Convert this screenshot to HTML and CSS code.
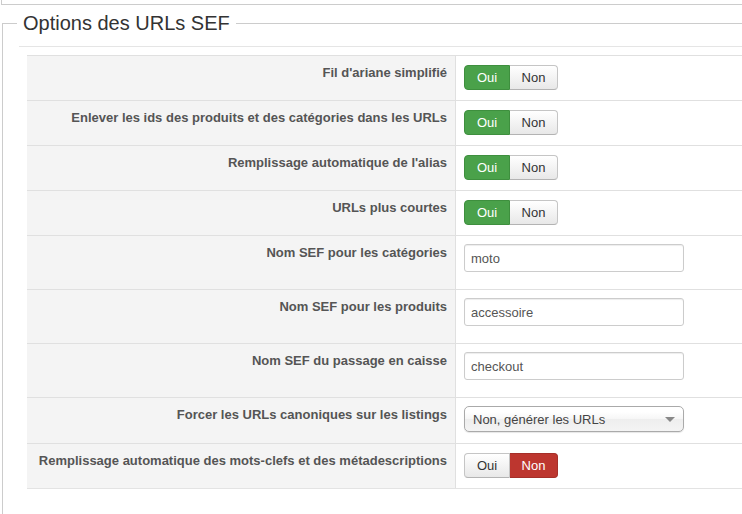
FILE: index.html
```html
<!DOCTYPE html>
<html lang="fr">
<head>
  <meta charset="UTF-8">
  <title>Options des URLs SEF</title>
  <link rel="stylesheet" href="styles.css">
</head>
<body>
  <div class="prev-box"></div>
  <fieldset class="options">
    <legend>Options des URLs SEF</legend>
    <div class="rule"></div>
    <table class="params">
      <tr>
        <td class="key">Fil d'ariane simplifié</td>
        <td class="ctrl toggle-cell">
          <div class="btn-group">
            <span class="btn btn-yes">Oui</span><span class="btn">Non</span>
          </div>
        </td>
      </tr>
      <tr>
        <td class="key">Enlever les ids des produits et des catégories dans les URLs</td>
        <td class="ctrl toggle-cell">
          <div class="btn-group">
            <span class="btn btn-yes">Oui</span><span class="btn">Non</span>
          </div>
        </td>
      </tr>
      <tr>
        <td class="key">Remplissage automatique de l'alias</td>
        <td class="ctrl toggle-cell">
          <div class="btn-group">
            <span class="btn btn-yes">Oui</span><span class="btn">Non</span>
          </div>
        </td>
      </tr>
      <tr>
        <td class="key">URLs plus courtes</td>
        <td class="ctrl toggle-cell">
          <div class="btn-group">
            <span class="btn btn-yes">Oui</span><span class="btn">Non</span>
          </div>
        </td>
      </tr>
      <tr>
        <td class="key">Nom SEF pour les catégories</td>
        <td class="ctrl input-cell"><input type="text" class="text-input" value="moto"></td>
      </tr>
      <tr>
        <td class="key">Nom SEF pour les produits</td>
        <td class="ctrl input-cell"><input type="text" class="text-input" value="accessoire"></td>
      </tr>
      <tr>
        <td class="key">Nom SEF du passage en caisse</td>
        <td class="ctrl input-cell"><input type="text" class="text-input" value="checkout"></td>
      </tr>
      <tr>
        <td class="key">Forcer les URLs canoniques sur les listings</td>
        <td class="ctrl select-cell">
          <div class="select-box">
            <span>Non, générer les URLs</span>
            <span class="arrow"></span>
          </div>
        </td>
      </tr>
      <tr>
        <td class="key">Remplissage automatique des mots-clefs et des métadescriptions</td>
        <td class="ctrl toggle-cell">
          <div class="btn-group">
            <span class="btn">Oui</span><span class="btn btn-no">Non</span>
          </div>
        </td>
      </tr>
    </table>
  </fieldset>
</body>
</html>
```

FILE: styles.css
```css
body {
  margin: 0;
  font-family: "Liberation Sans", Arial, sans-serif;
  font-size: 13px;
  color: #333;
  background: #fff;
  overflow: hidden;
  width: 742px;
  height: 514px;
}
.prev-box {
  height: 4px;
  margin-left: 1px;
  border-left: 1px solid #ccc;
  border-bottom: 1px solid #ccc;
}
.options {
  box-sizing: border-box;
  margin: 7px 0 0 2px;
  padding: 0 0 40px 0;
  width: 740px;
  border: 1px solid #ccc;
  border-right: 0;
}
.options legend {
  margin-left: 14px;
  padding: 0 6px;
  font-size: 20px;
  color: #333;
}
.rule {
  margin: 11px 0 0 16px;
  border-top: 1px solid #e5e5e5;
}
.params {
  margin: 8px 0 0 24px;
  width: 715px;
  border-collapse: separate;
  border-spacing: 0;
  border-bottom: 1px solid #e3e3e3;
}
.params td {
  border-top: 1px solid #e0e0e0;
  vertical-align: top;
}
.key {
  width: 412px;
  padding: 8px;
  background: #f4f4f4;
  border-right: 1px solid #e0e0e0;
  text-align: right;
  font-weight: bold;
  line-height: 18px;
  color: #555;
}
.ctrl {
  padding: 8px;
  background: #fff;
}
.toggle-cell {
  padding-top: 9px;
  padding-bottom: 10px;
}
.input-cell {
  padding-bottom: 17px;
}
.select-cell {
  padding-bottom: 11px;
}
.btn-group {
  display: flex;
  height: 25px;
}
.btn {
  display: block;
  box-sizing: border-box;
  height: 25px;
  padding: 0 11px;
  line-height: 23px;
  font-size: 13px;
  color: #333;
  background: linear-gradient(#ffffff, #e8e8e8);
  border: 1px solid #c5c5c5;
  border-bottom-color: #b3b3b3;
}
.btn:first-child {
  width: 46px;
  border-radius: 4px 0 0 4px;
  text-align: center;
}
.btn:last-child {
  width: 48px;
  border-left: 0;
  border-radius: 0 4px 4px 0;
  text-align: center;
}
.btn-yes {
  color: #fff;
  background: #4aa14a;
  border-color: #3e8f3e;
}
.btn-no {
  color: #fff;
  background: #bd362f;
  border-color: #a52f29;
}
.text-input {
  display: block;
  box-sizing: border-box;
  width: 220px;
  height: 28px;
  margin: 0;
  padding: 0 6px;
  font-family: "Liberation Sans", Arial, sans-serif;
  font-size: 13px;
  color: #555;
  border: 1px solid #ccc;
  border-radius: 3px;
  box-shadow: inset 0 1px 1px rgba(0,0,0,0.075);
}
.select-box {
  display: flex;
  align-items: center;
  justify-content: space-between;
  box-sizing: border-box;
  width: 220px;
  height: 26px;
  padding: 0 8px 0 8px;
  font-size: 13px;
  color: #444;
  border: 1px solid #aaa;
  border-radius: 5px;
  background: linear-gradient(#ffffff 20%, #f6f6f6 50%, #eeeeee 52%, #f4f4f4 100%);
  box-shadow: 0 1px 1px rgba(0,0,0,0.1);
}
.arrow {
  width: 0;
  height: 0;
  border-left: 5px solid transparent;
  border-right: 5px solid transparent;
  border-top: 5px solid #888;
}
```
